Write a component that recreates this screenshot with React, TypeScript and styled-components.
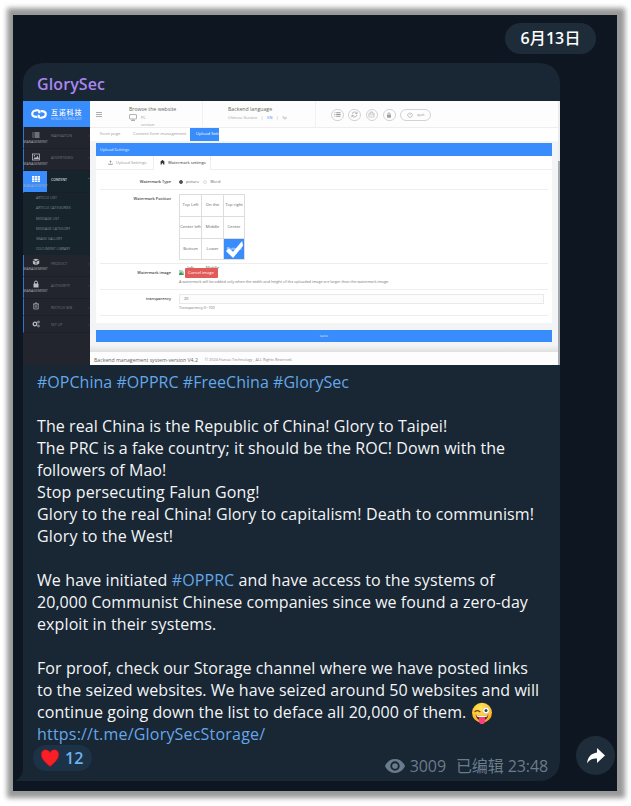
import React from 'react';
import styled, { createGlobalStyle } from 'styled-components';

const Global = createGlobalStyle`
  * { box-sizing: border-box; }
  html, body { margin: 0; background: #fff; }
  body { font-family: "Open Sans", "Noto Sans", "Noto Sans CJK SC", sans-serif; overflow: hidden; }
  svg { display: block; flex: none; }
`;

/* ---------- chat window ---------- */
const Page = styled.div`
  height: 806px;
  padding: 15px 14px 15px 13px;
`;
const Window = styled.main`
  width: 604px;
  height: 776px;
  padding: 8px 2px 10px 10px;
  background: #0e1621;
  box-shadow: 1px 0 5px 7px #999;
  display: flex;
  flex-direction: column;
`;
const DatePill = styled.div`
  align-self: flex-end;
  width: 91px;
  height: 31px;
  margin: 0 19px 9px 0;
  border-radius: 16px;
  background: #1e2c3a;
  color: #fff;
  font-size: 16px;
  font-weight: 500;
  letter-spacing: 0.1px;
  line-height: 31px;
  text-align: center;
  white-space: nowrap;
`;
const Digits = styled.span`
  font-weight: 600;
`;
const MessageRow = styled.div`
  display: flex;
  align-items: flex-end;
  gap: 16px;
`;
const Bubble = styled.article`
  position: relative;
  width: 537px;
  height: 718px;
  background: #192633;
  border-radius: 20px 20px 20px 0;
  display: flex;
  flex-direction: column;
`;
const Tail = styled.svg`
  position: absolute;
  left: -7px;
  bottom: 0;
`;
const Author = styled.div`
  height: 38px;
  padding: 10px 14px 0;
  font-size: 16px;
  font-weight: 600;
  letter-spacing: 0.1px;
  line-height: 22px;
  color: #a987ee;
`;
const MessageText = styled.div`
  padding: 6px 14px 0;
  font-size: 16px;
  line-height: 22px;
  color: #f3f5f7;
`;
const Line = styled.div<{ $ls?: number }>`
  height: 22px;
  white-space: pre;
  letter-spacing: ${p => p.$ls ?? 0}px;
`;
const Link = styled.span`
  color: #64a8e8;
`;
const InlineEmoji = styled.svg`
  display: inline-block;
  vertical-align: -6px;
`;
const Meta = styled.footer`
  display: flex;
  justify-content: space-between;
  align-items: flex-start;
  padding: 0 12px 0 10px;
`;
const Reaction = styled.div`
  width: 59px;
  height: 26px;
  border-radius: 13px;
  background: #1c3347;
  display: flex;
  align-items: center;
  gap: 6px;
  padding-left: 8px;
  font-size: 16px;
  font-weight: 600;
  color: #6db2ee;
`;
const Stats = styled.div`
  height: 22px;
  margin-top: 10px;
  display: flex;
  align-items: center;
  white-space: pre;
  font-size: 16px;
  line-height: 22px;
  color: #6a7c8c;
`;
const Views = styled.span`
  margin: 0 10px 0 5px;
  letter-spacing: -0.1px;
`;
const Edited = styled.span`
  letter-spacing: -0.1px;
`;
const Share = styled.button`
  width: 39px;
  height: 39px;
  margin-bottom: 6px;
  padding: 0;
  border: 0;
  border-radius: 50%;
  background: #1f2c39;
  display: grid;
  place-items: center;
`;

/* ---------- attached admin-panel preview ---------- */
const Preview = styled.section`
  width: 537px;
  height: 264px;
  display: flex;
  background: #f3f4f5;
  overflow: hidden;
  font-size: 4px;
  line-height: 6px;
  color: #666;
  white-space: nowrap;
`;
const Sidebar = styled.nav`
  width: 67px;
  flex: none;
  background: #22252e;
`;
const Brand = styled.div`
  height: 26px;
  background: #398cfb;
  color: #fff;
  display: flex;
  align-items: center;
  padding-left: 8px;
  gap: 4px;
`;
const BrandName = styled.div`
  font-family: "Noto Sans CJK SC", sans-serif;
  font-size: 7px;
  font-weight: 500;
  letter-spacing: 0.8px;
  line-height: 9px;
`;
const BrandSub = styled.div`
  font-size: 2.6px;
  line-height: 4px;
  letter-spacing: 0.2px;
  opacity: 0.7;
`;
const SideItem = styled.div<{ $h: number; $active?: boolean }>`
  height: ${p => p.$h}px;
  display: grid;
  grid-template-columns: 23px 1fr 6px;
  border-bottom: 1px solid #1b1e26;
  border-left: 1px solid ${p => (p.$active ? '#398cfb' : '#3173c9')};
  background: ${p => (p.$active ? '#16242c' : 'transparent')};
  color: ${p => (p.$active ? '#fff' : '#70757c')};
  font-size: 3.5px;
`;
const SideIcon = styled.div<{ $active?: boolean }>`
  display: flex;
  flex-direction: column;
  align-items: center;
  padding-top: 3.5px;
  background: ${p => (p.$active ? '#398cfb' : 'transparent')};
  color: ${p => (p.$active ? '#fff' : '#b9bcc1')};
`;
const SideCaption = styled.span`
  font-size: 3.5px;
  line-height: 4px;
  margin-top: 1px;
  color: #a6abb3;
`;
const SideLabel = styled.span`
  padding: 6px 0 0 4px;
`;
const SubMenu = styled.div`
  height: 62px;
  padding: 0.5px 0 0 13px;
  background: #17242c;
  color: #7d878d;
  font-size: 3.5px;
`;
const SubItem = styled.div`
  height: 10.3px;
  line-height: 10.3px;
`;
const Work = styled.div`
  width: 468px;
  display: flex;
  flex-direction: column;
`;
const TopBar = styled.header`
  height: 27px;
  background: #fdfdfd;
  border-bottom: 1px solid #eee;
  display: grid;
  grid-template-columns: 39px 74px 113px 1fr;
`;
const TopCell = styled.div<{ $left?: number }>`
  padding: 5px 0 0 ${p => p.$left ?? 0}px;
  border-right: 1px solid #f1f1f1;
`;
const MenuCell = styled.div`
  padding: 11px 0 0 6px;
`;
const Heading = styled.div`
  font-size: 5.2px;
  line-height: 7px;
  color: #666;
`;
const Small = styled.div`
  display: flex;
  gap: 4px;
  margin-top: 1px;
  font-size: 3.9px;
  line-height: 7px;
  color: #999;
`;
const Blue = styled.span`
  color: #398cfb;
`;
const Tools = styled.div`
  display: flex;
  gap: 4.5px;
  padding: 7.5px 0 0 15px;
`;
const Tool = styled.span<{ $w?: number }>`
  width: ${p => p.$w ?? 12.8}px;
  height: 12.8px;
  border: 1px solid #d3d3d3;
  border-radius: 7px;
  display: flex;
  align-items: center;
  justify-content: center;
  gap: 4px;
  color: #9a9a9a;
`;
const Tabs = styled.div`
  height: 13px;
  background: #fff;
  display: flex;
  align-items: stretch;
  line-height: 12px;
  font-size: 4.2px;
  color: #999;
`;
const Tab = styled.span<{ $w: number; $pad: number; $active?: boolean }>`
  width: ${p => p.$w}px;
  padding-left: ${p => p.$pad}px;
  background: ${p => (p.$active ? '#398cfb' : 'transparent')};
  color: ${p => (p.$active ? '#fff' : '#999')};
`;
const Panel = styled.div`
  width: 456px;
  height: 180px;
  margin: 2px 0 0 6px;
  background: #fff;
`;
const PanelTitle = styled.div`
  height: 13px;
  padding-left: 4px;
  background: #398cfb;
  color: #e4efff;
  font-size: 4px;
  line-height: 13px;
`;
const PanelTabs = styled.div`
  height: 13.5px;
  display: flex;
  font-size: 4.15px;
`;
const PanelTab = styled.div<{ $w: number; $pad: number; $active?: boolean }>`
  width: ${p => p.$w}px;
  padding: 1px 0 0 ${p => p.$pad}px;
  display: flex;
  align-items: center;
  gap: 3px;
  color: ${p => (p.$active ? '#333' : '#999')};
  border-right: ${p => (p.$w ? '1px solid #eee' : '0')};
  border-bottom: 1px solid ${p => (p.$active ? '#fff' : '#eee')};
  ${p => (p.$w ? '' : 'flex: 1;')}
`;
const FormRow = styled.div<{ $h: number; $top: number }>`
  height: ${p => p.$h}px;
  margin: 0 4px;
  padding-top: ${p => p.$top}px;
  border-bottom: 1px solid #eee;
  display: grid;
  grid-template-columns: 71px 1fr;
  column-gap: 8px;
`;
const Label = styled.div<{ $top?: number }>`
  padding-top: ${p => p.$top ?? 0}px;
  text-align: right;
  font-size: 3.9px;
  font-weight: 600;
  color: #444;
`;
const Options = styled.div`
  display: flex;
  align-items: center;
  height: 6px;
  gap: 3px;
`;
const Dot = styled.span<{ $on?: boolean }>`
  width: 4px;
  height: 4px;
  border-radius: 50%;
  border: 0.5px solid ${p => (p.$on ? '#555' : '#ddd')};
  background: ${p => (p.$on ? '#555' : '#fff')};
  margin-left: ${p => (p.$on ? 0 : 1)}px;
`;
const PositionGrid = styled.div`
  width: 66px;
  height: 66px;
  display: grid;
  grid-template-columns: 22px 22px 21px;
  grid-template-rows: 22px 22px 21px;
  border-left: 1px solid #ddd;
  border-top: 1px solid #ddd;
`;
const Cell = styled.div<{ $on?: boolean }>`
  border-right: 1px solid #ddd;
  border-bottom: 1px solid #ddd;
  text-align: center;
  font-size: 4.2px;
  line-height: 19.5px;
  background: ${p => (p.$on ? '#398cfb' : 'transparent')};
  color: ${p => (p.$on ? '#fff' : '#666')};
  display: grid;
  grid-template-columns: 100%;
  align-items: start;
  > * { grid-area: 1 / 1; }
`;
const ImageLine = styled.div`
  display: flex;
  align-items: center;
  height: 10px;
`;
const CancelButton = styled.span`
  position: relative;
  width: 33px;
  height: 10px;
  margin-left: 0.5px;
  border-radius: 1px;
  background: #e15b58;
  color: #fff;
  font-size: 4.2px;
  line-height: 9.5px;
  text-align: center;
`;
const Hint = styled.div`
  margin-top: 1px;
  font-size: 3.77px;
  line-height: 6px;
  color: #777;
`;
const Field = styled.div`
  width: 365px;
  height: 10px;
  padding-left: 4px;
  border: 1px solid #e9e9e9;
  background: #fcfcfc;
  font-size: 3.8px;
  line-height: 8px;
`;
const Save = styled.div`
  width: 456px;
  height: 12px;
  margin: 7px 0 0 6px;
  background: #398cfb;
  color: #dcebff;
  font-size: 4px;
  line-height: 12px;
  text-align: center;
`;
const Shade = styled.div`
  height: 10px;
  background: linear-gradient(#f3f4f5 30%, #e0e0e0);
`;
const Foot = styled.div`
  height: 13px;
  padding: 2px 0 0 4px;
  background: #fdfdfd;
  display: flex;
  align-items: center;
  gap: 7px;
  font-size: 5.2px;
`;
const Copyright = styled.span`
  font-size: 3.85px;
  color: #888;
`;
const Scroll = styled.div`
  width: 2px;
  padding-top: 60px;
  background: #e9edf0;
`;
const Thumb = styled.div`
  height: 204px;
  background: #a3a9ae;
`;

type IconName = 'list' | 'image' | 'grid' | 'cube' | 'lock' | 'trash' | 'cogs' | 'refresh' | 'case' | 'power' | 'upload' | 'fire';

const Icon = ({ name, size = 7 }: { name: IconName; size?: number }) => {
  const s = { fill: 'none', stroke: 'currentColor', strokeWidth: 1.6 };
  const art: Record<IconName, React.ReactNode> = {
    list: <path d="M1 3h2v2H1zM5 3h10v2H5zM1 7h2v2H1zM5 7h10v2H5zM1 11h2v2H1zM5 11h10v2H5z" fill="currentColor" />,
    image: <><rect x="1" y="2" width="14" height="12" {...s} /><path d="M3 12l3-4 2 2 3-5 3 7z" fill="currentColor" /><circle cx="5" cy="5.5" r="1.3" fill="currentColor" /></>,
    grid: <path d="M0 2h4.6v3.4H0zM5.7 2h4.6v3.4H5.7zM11.4 2H16v3.4h-4.6zM0 6.4h4.6v3.4H0zM5.7 6.4h4.6v3.4H5.7zM11.4 6.4H16v3.4h-4.6zM0 10.8h4.6v3.4H0zM5.7 10.8h4.6v3.4H5.7zM11.4 10.8H16v3.4h-4.6z" fill="currentColor" />,
    cube: <path d="M1.500 4L7 1.500 14 3 8 6zM1.500 5.500L7.300 7.500V14.500L2 11.500zM8.700 7.500L14.500 4.500V11L8.700 14.500z" fill="currentColor" />,
    lock: <><path d="M5 8V5a3 3 0 016 0v3" {...s} strokeWidth={2} /><rect x="3" y="7" width="10" height="8" rx="1" fill="currentColor" /></>,
    trash: <path d="M2 4h12M6 4V2h4v2M3.5 4v10h9V4M6.5 6.5v5M9.5 6.5v5" {...s} strokeWidth={1.3} />,
    cogs: <><circle cx="6" cy="8" r="3.6" {...s} strokeWidth={2.6} /><circle cx="13" cy="4" r="1.8" {...s} /><circle cx="13" cy="12" r="1.8" {...s} /></>,
    refresh: <path d="M2.5 7A5.7 5.7 0 0113 5M14 1.5V6H9.6M13.5 9A5.7 5.7 0 013 11M2 14.5V10h4.4" {...s} />,
    case: <path d="M2 5h12v9H2zM5.5 5V2h5v3M2 9h12" {...s} strokeWidth={1} />,
    power: <path d="M5 3a6 6 0 106 0M8 1v7" {...s} />,
    upload: <path d="M7 12V6H4l4-5 4 5H9v6zM1 11h3v2h8v-2h3v4H1z" fill="currentColor" />,
    fire: <path d="M2 7a3 3 0 013-4 3 3 0 016 0 3 3 0 013 4v7h-4v-4H6v4H2z" fill="currentColor" />,
  };
  return <svg width={size} height={size} viewBox="0 0 16 16">{art[name]}</svg>;
};

const sideTop: [IconName, string, number, boolean][] = [
  ['list', 'NAVIGATION', 22, true],
  ['image', 'ADVERTISING', 22, true],
  ['grid', 'CONTENT', 21.5, true],
];
const sideBottom: [IconName, string, number, boolean][] = [
  ['cube', 'PRODUCT', 22, true],
  ['lock', 'AUTHORITY', 22, true],
  ['trash', 'RECYCLE BIN', 17.5, false],
  ['cogs', 'SET UP', 17, false],
];
const subItems = ['ARTICLE LIST', 'ARTICLE CATEGORIES', 'MESSAGE LIST', 'MESSAGE CATEGORY', 'IMAGE GALLERY', 'DOCUMENT LIBRARY'];

const SideEntry = ({ item }: { item: [IconName, string, number, boolean] }) => {
  const [icon, label, h, caption] = item;
  const active = label === 'CONTENT';
  return (
    <SideItem $h={h} $active={active}>
      <SideIcon $active={active}>
        <Icon name={icon} size={8} />
        {caption && <SideCaption>MANAGEMENT</SideCaption>}
      </SideIcon>
      <SideLabel>{label}</SideLabel>
      <SideLabel as="i">{active ? '˅' : '‹'}</SideLabel>
    </SideItem>
  );
};

const AdminPreview = () => (
  <Preview>
    <Sidebar>
      <Brand>
        <svg width="16" height="12" viewBox="0 0 32 24" fill="none" stroke="#fff" strokeWidth="4.400">
          <path d="M11 5C5 5 2.500 8 2.500 12S6 18.500 13 17.500" />
          <path d="M9 4.500h4c3 0 4 2 3.500 6" />
          <path d="M21 19c6 0 8.500-3 8.500-7S26 5.500 19 6.500" />
          <path d="M23 19.500h-4c-3 0-4-2-3.500-6" />
        </svg>
        <div>
          <BrandName>互诺科技</BrandName>
          <BrandSub>HUNUO TECHNOLOGY</BrandSub>
        </div>
      </Brand>
      {sideTop.map(i => <SideEntry key={i[1]} item={i} />)}
      <SubMenu>{subItems.map(t => <SubItem key={t}>{t}</SubItem>)}</SubMenu>
      {sideBottom.map(i => <SideEntry key={i[1]} item={i} />)}
    </Sidebar>
    <Work>
      <TopBar>
        <MenuCell>
          <svg width="6" height="5" viewBox="0 0 6 5" stroke="#999" strokeWidth="0.8"><path d="M0 .5h6M0 2.5h6M0 4.5h6" /></svg>
        </MenuCell>
        <TopCell>
          <Heading>Browse the website</Heading>
          <Small>
            <svg width="8" height="7" viewBox="0 0 16 14" fill="none" stroke="#999" strokeWidth="1.5"><rect x="1" y="1" width="14" height="9" rx="1" /><path d="M4 13h8M8 10v3" /></svg>
            <span>PC<br />version</span>
          </Small>
        </TopCell>
        <TopCell $left={25}>
          <Heading>Backend language</Heading>
          <Small><span>Chinese Version</span><span>|</span><Blue>EN</Blue><span>|</span><span>Sp</span></Small>
        </TopCell>
        <Tools>
          <Tool><Icon name="list" /></Tool>
          <Tool><Icon name="refresh" /></Tool>
          <Tool><Icon name="case" /></Tool>
          <Tool><Icon name="lock" size={6} /></Tool>
          <Tool $w={31}><Icon name="power" size={6} />quit</Tool>
        </Tools>
      </TopBar>
      <Tabs>
        <Tab $w={37} $pad={10}>front page</Tab>
        <Tab $w={63} $pad={6}>Content form management</Tab>
        <Tab $w={29} $pad={6} $active>Upload Sett</Tab>
      </Tabs>
      <Panel>
        <PanelTitle>Upload Settings</PanelTitle>
        <PanelTabs>
          <PanelTab $w={58} $pad={12}><Icon name="upload" size={5} />Upload Settings</PanelTab>
          <PanelTab $w={57} $pad={6} $active><Icon name="fire" size={5} />Watermark settings</PanelTab>
          <PanelTab $w={0} $pad={0} />
        </PanelTabs>
        <FormRow $h={20} $top={9.5}>
          <Label>Watermark Type</Label>
          <Options><Dot $on />picture<Dot />Word</Options>
        </FormRow>
        <FormRow $h={74} $top={4}>
          <Label $top={2}>Watermark Position</Label>
          <PositionGrid>
            <Cell>Top Left</Cell><Cell>On the</Cell><Cell>Top right</Cell>
            <Cell>Center left</Cell><Cell>Middle</Cell><Cell>Center</Cell>
            <Cell><span>Bottom<br />left</span></Cell>
            <Cell><span>Lower<br />Middle</span></Cell>
            <Cell $on>
              <span>Bottom</span>
              <svg width="20" height="20" viewBox="0 0 21 21"><path d="M2 12.500l3.500-2.500 4 3.500L19 2l1 5L9.500 20z" fill="#fff" /></svg>
            </Cell>
          </PositionGrid>
        </FormRow>
        <FormRow $h={26} $top={4}>
          <Label $top={2}>Watermark image</Label>
          <div>
            <ImageLine>
              <svg width="5" height="5" viewBox="0 0 5 5"><path d="M0 0h3l2 2v3H0z" fill="#a9d4c3" /><path d="M0 4l2-2 3 3H0z" fill="#3f9b4c" /></svg>
              <CancelButton>Cancel image</CancelButton>
            </ImageLine>
            <Hint>A watermark will be added only when the width and height of the uploaded image are larger than the watermark image.</Hint>
          </div>
        </FormRow>
        <FormRow $h={26} $top={4}>
          <Label $top={2}>transparency</Label>
          <div>
            <Field>20</Field>
            <Hint>Transparency 0~100</Hint>
          </div>
        </FormRow>
      </Panel>
      <Save>save</Save>
      <Shade />
      <Foot>Backend management system-version V4.2<Copyright>© 2024 Hunuo Technology , ALL Rights Reserved.</Copyright></Foot>
    </Work>
    <Scroll><Thumb /></Scroll>
  </Preview>
);

const Wink = () => (
  <InlineEmoji width="22" height="22" viewBox="0 0 22 22">
    <defs>
      <radialGradient id="face" cx="0.45" cy="0.3" r="0.75">
        <stop offset="0" stopColor="#ffe75a" /><stop offset="0.7" stopColor="#fdbf2d" /><stop offset="1" stopColor="#ee8c1b" />
      </radialGradient>
    </defs>
    <circle cx="11" cy="10.7" r="10" fill="url(#face)" />
    <path d="M4.5 12.5q6.5 3 13 0-1 6-6.500 6t-6.500-6z" fill="#6b2a12" />
    <path d="M5.300 12.900q5.700 2.300 11.400 0l-.6 1.600q-5 1.700-10.200 0z" fill="#fff" />
    <path d="M8 15.600q3-1.300 6 0v3.600a3 2.800 0 01-6 0z" fill="#f83f83" />
    <path d="M4 9.500q2.300-1.800 5 .2" fill="none" stroke="#7a3d10" strokeWidth="1.300" strokeLinecap="round" />
    <circle cx="15" cy="8.600" r="3.300" fill="#fff" stroke="#c4a36a" strokeWidth="0.500" />
    <circle cx="15" cy="8.600" r="1.500" fill="#35424e" />
  </InlineEmoji>
);

export default function App() {
  return (
    <Page>
      <Global />
      <Window>
        <DatePill><Digits>6</Digits>月<Digits>13</Digits>日</DatePill>
        <MessageRow>
          <Bubble>
            <Tail width="8" height="20" viewBox="0 0 8 20"><path d="M7 0v6C7 12 5 16 0 19.300V20h8V0z" fill="#192633" /></Tail>
            <Author>GlorySec</Author>
            <AdminPreview />
            <MessageText>
              <Line $ls={0.03}><Link>#OPChina</Link> <Link>#OPPRC</Link> <Link>#FreeChina</Link> <Link>#GlorySec</Link></Line>
              <Line />
              <Line $ls={0.07}>The real China is the Republic of China! Glory to Taipei!</Line>
              <Line $ls={0.05}>The PRC is a fake country; it should be the ROC! Down with the</Line>
              <Line $ls={0.03}>followers of Mao!</Line>
              <Line $ls={0.14}>Stop persecuting Falun Gong!</Line>
              <Line $ls={0.125}>Glory to the real China! Glory to capitalism! Death to communism!</Line>
              <Line $ls={0.15}>Glory to the West!</Line>
              <Line />
              <Line $ls={0.1}>We have initiated <Link>#OPPRC</Link> and have access to the systems of</Line>
              <Line $ls={0.06}>20,000 Communist Chinese companies since we found a zero-day</Line>
              <Line $ls={0.11}>exploit in their systems.</Line>
              <Line />
              <Line $ls={0.095}>For proof, check our Storage channel where we have posted links</Line>
              <Line $ls={0.045}>to the seized websites. We have seized around 50 websites and will</Line>
              <Line $ls={0.06}>continue going down the list to deface all 20,000 of them. <Wink /></Line>
              <Line $ls={0.2}><Link>https://t.me/GlorySecStorage/</Link></Line>
            </MessageText>
            <Meta>
              <Reaction>
                <svg width="18" height="18" viewBox="0 0 18 18">
                  <path d="M9 17.500C4 13.500.2 9.500.2 5.400.2 2.500 2.200.7 4.600.7 6.500.7 8.200 1.800 9 3.500 9.800 1.800 11.500.7 13.400.7c2.400 0 4.400 1.800 4.400 4.700 0 4.100-3.800 8.100-8.800 12.100z" fill="#f91f27" stroke="#c30d1a" strokeWidth="0.500" />
                </svg>
                12
              </Reaction>
              <Stats>
                <svg width="20" height="14" viewBox="0 0 20 14">
                  <path fillRule="evenodd" d="M10 0C5.500 0 1.700 2.900 0 7c1.700 4.100 5.500 7 10 7s8.300-2.900 10-7c-1.700-4.100-5.500-7-10-7zm0 11.700a4.700 4.700 0 110-9.400 4.700 4.700 0 010 9.400z" fill="#6a7c8c" />
                  <circle cx="10" cy="7" r="2.800" fill="#6a7c8c" />
                </svg>
                <Views>3009</Views><Edited>已编辑 23:48</Edited>
              </Stats>
            </Meta>
          </Bubble>
          <Share aria-label="Share">
            <svg width="18" height="16" viewBox="0 0 18 16"><path d="M10 0l8 7.500-8 7.500v-4.400C5.500 10.400 2.700 11.800 0 15.200 .8 9 4.200 5.300 10 4.500z" fill="#fff" /></svg>
          </Share>
        </MessageRow>
      </Window>
    </Page>
  );
}
